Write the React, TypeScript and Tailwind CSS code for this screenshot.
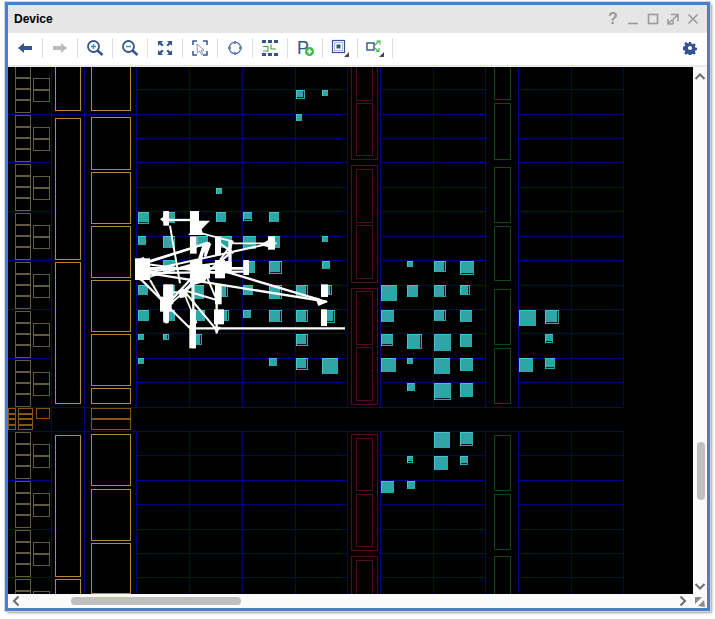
const FONT = "font-['Liberation_Sans',Arial,sans-serif]";

const H_MAIN = [114, 162, 211, 260, 309, 358, 407, 431, 480, 529, 577];
const H_DIM = [89, 138, 187, 236, 285, 333, 382, 455, 504, 553];
const V_MAIN = [136, 295, 380, 485, 518];
const V_DIM = [189, 242, 347, 433, 571, 623];

// small slice columns on the far left, one group per clock row
const GROUP_TOPS = [66, 115, 164, 213, 262, 311, 360, 432, 481, 530, 579];

const TALL_ORANGE: number[][] = [
  [55, 60, 80, 110], [55, 118, 80, 259], [55, 262, 80, 403], [55, 435, 80, 576], [55, 579, 80, 600],
  [91, 60, 130, 110], [91, 117, 130, 169], [91, 172, 130, 223], [91, 226, 130, 277], [91, 280, 130, 331],
  [91, 334, 130, 385], [91, 388, 130, 403], [91, 434, 130, 485], [91, 489, 130, 540], [91, 543, 130, 593],
];

const RED: number[][] = [
  [351, 60, 377, 159], [356, 60, 372, 100], [356, 103, 372, 155],
  [351, 165, 377, 282], [356, 169, 372, 222], [356, 225, 372, 278],
  [351, 288, 377, 404], [356, 291, 372, 344], [356, 347, 372, 400],
  [351, 434, 377, 550], [356, 438, 372, 490], [356, 494, 372, 546],
  [351, 556, 377, 620], [356, 560, 372, 620],
];

const GREEN: number[][] = [
  [494, 60, 510, 99], [494, 103, 510, 159], [494, 167, 510, 222], [494, 226, 510, 280],
  [494, 289, 510, 344], [494, 348, 510, 403], [494, 435, 510, 490], [494, 494, 510, 549], [494, 556, 510, 600],
];

// x, y, w, h, outline style: 0 solid, 1 gap at bottom, 2 gap at right, 3 both
const CELLS: number[][] = [
  [296, 90, 9, 9, 3], [322, 90, 6, 6, 0], [296, 114, 6, 7, 0], [216, 188, 6, 6, 0],
  [138, 212, 11, 12, 1], [163, 212, 12, 11, 0], [216, 212, 10, 10, 0], [243, 212, 9, 9, 1], [269, 212, 10, 10, 0],
  [138, 236, 8, 9, 0], [163, 236, 12, 12, 2], [197, 236, 11, 11, 0], [220, 236, 12, 12, 0], [243, 236, 13, 13, 0], [269, 236, 11, 12, 0], [322, 236, 6, 6, 0],
  [163, 260, 12, 12, 0], [243, 261, 12, 12, 0], [269, 261, 13, 13, 3], [322, 261, 8, 8, 0],
  [138, 285, 10, 10, 0], [163, 285, 12, 12, 0], [191, 285, 13, 14, 0], [220, 285, 8, 12, 2], [243, 285, 10, 10, 0], [269, 285, 13, 14, 2], [296, 285, 12, 12, 2], [322, 285, 10, 10, 2],
  [138, 310, 11, 11, 0], [163, 310, 12, 11, 0], [195, 310, 10, 11, 0], [219, 310, 10, 11, 2], [243, 310, 8, 8, 0], [269, 310, 13, 12, 2], [296, 310, 12, 12, 2], [322, 310, 13, 13, 3],
  [138, 334, 6, 6, 0], [163, 334, 6, 6, 2], [190, 334, 12, 11, 2], [296, 334, 12, 12, 3],
  [138, 358, 6, 6, 0], [269, 358, 8, 8, 0], [296, 358, 12, 12, 3], [322, 358, 16, 16, 0],
  [407, 261, 6, 6, 0], [434, 261, 12, 11, 2], [460, 261, 14, 14, 1],
  [381, 285, 16, 16, 0], [407, 285, 11, 12, 0], [434, 285, 12, 12, 2], [460, 285, 10, 10, 2],
  [381, 310, 13, 12, 0], [434, 310, 12, 11, 2], [460, 310, 12, 12, 0], [519, 310, 17, 16, 0], [545, 310, 14, 14, 3],
  [381, 334, 12, 12, 1], [407, 334, 15, 15, 2], [434, 334, 17, 17, 0], [460, 334, 12, 13, 0], [545, 334, 8, 9, 1],
  [381, 358, 15, 14, 0], [407, 358, 6, 6, 0], [434, 358, 16, 16, 0], [460, 358, 13, 13, 0], [519, 358, 14, 14, 0], [545, 358, 10, 11, 1],
  [407, 383, 8, 8, 0], [434, 383, 17, 17, 1], [460, 383, 13, 14, 0],
  [434, 432, 16, 16, 0], [460, 432, 13, 14, 1],
  [407, 456, 6, 7, 1], [434, 456, 14, 14, 0], [460, 456, 8, 9, 1],
  [381, 481, 13, 12, 0], [407, 481, 8, 8, 0],
];

// net rubber bands, in a 3x space starting at (130,190)
const NET_BLOCKS: number[][] = [
  [100, 63, 17, 44], [180, 63, 27, 72], [180, 139, 20, 52], [255, 139, 18, 57], [414, 139, 21, 40],
  [15, 205, 45, 65], [180, 210, 37, 60], [255, 210, 30, 55], [340, 210, 17, 45], [100, 283, 30, 60],
  [255, 283, 20, 60], [573, 283, 21, 38], [100, 330, 17, 68], [180, 358, 18, 50], [252, 358, 30, 45],
  [573, 358, 18, 50], [178, 405, 20, 70], [215, 225, 25, 40], [285, 215, 20, 35], [90, 320, 35, 45],
];

const NET_LINES: number[][] = [
  [117, 90, 190, 90, 7], [120, 107, 150, 280, 6], [215, 130, 310, 155, 5], [200, 170, 20, 225, 7],
  [235, 158, 60, 215, 7], [440, 160, 310, 160, 5], [400, 165, 60, 240, 6], [60, 235, 340, 235, 8],
  [60, 250, 590, 335, 7], [270, 240, 570, 330, 7], [20, 255, 110, 345, 7], [60, 270, 100, 340, 6],
  [180, 270, 110, 345, 7], [230, 250, 110, 350, 6], [110, 345, 180, 415, 6], [160, 300, 260, 420, 6],
  [230, 260, 265, 340, 6], [160, 300, 260, 330, 6], [220, 170, 180, 290, 7], [300, 190, 190, 280, 7],
  [190, 415, 645, 415, 7], [190, 270, 190, 475, 7], [105, 300, 110, 400, 8], [260, 340, 260, 430, 7],
  [300, 150, 300, 240, 10], [20, 250, 340, 245, 7], [60, 260, 180, 225, 6], [30, 220, 260, 250, 6],
  [60, 245, 300, 215, 6], [160, 305, 230, 240, 8], [160, 305, 100, 310, 6], [160, 305, 200, 400, 5],
  [270, 160, 310, 190, 6], [310, 155, 270, 210, 6], [225, 160, 210, 210, 10], [225, 200, 240, 160, 8],
];

const NET_HEADS = [
  '90,88 108,74 108,102', '205,92 240,92 215,118 220,135 175,135 190,115', '390,165 415,150 415,172',
  '555,322 595,335 565,348', '172,408 195,400 195,420', '250,410 272,410 260,432', '215,160 240,155 225,195',
  '15,215 40,200 60,225 62,265 30,272 15,255', '175,270 205,225 240,240 225,275 190,285', '145,300 175,295 170,320 150,325',
];

function Box({ b, color }: { b: number[]; color: string }) {
  return <rect x={b[0] + 0.5} y={b[1] + 0.5} width={b[2] - b[0]} height={b[3] - b[1]} fill="none" stroke={color} />;
}

function Cell({ c }: { c: number[] }) {
  const [x, y, w, h, gap] = c;
  return (
    <g>
      <rect x={x} y={y} width={w} height={h} fill="#2fa5a6" />
      <rect x={x} y={y} width={w} height={1} fill="#45c3cb" />
      <rect x={x} y={y} width={1} height={h} fill="#45c3cb" />
      {(gap === 1 || gap === 3) && <rect x={x + 1} y={y + h - 2} width={w - 2} height={1} fill="#04211f" />}
      {(gap === 2 || gap === 3) && <rect x={x + w - 2} y={y + 1} width={1} height={h - 2} fill="#04211f" />}
    </g>
  );
}

function SliceGroup({ top }: { top: number }) {
  const c = '#625a3c';
  return (
    <g>
      <Box b={[15, top, 30, top + 11]} color={c} />
      <Box b={[15, top + 12, 30, top + 22]} color={c} />
      <Box b={[15, top + 23, 30, top + 33]} color={c} />
      <Box b={[15, top + 34, 30, top + 46]} color={c} />
      <Box b={[33, top + 12, 49, top + 23]} color={c} />
      <Box b={[33, top + 24, 49, top + 35]} color={c} />
    </g>
  );
}

function DeviceCanvas() {
  return (
    <svg className="block h-[527px] w-[685px] bg-black" viewBox="8 67 685 527" width={685} height={527}>
      <g shapeRendering="crispEdges">
        {H_MAIN.concat(H_DIM).map((y) => {
          const main = H_MAIN.includes(y);
          const color = main ? '#00008a' : '#000072';
          const wide = y === 407 || y === 431;
          return (
            <g key={y} stroke={color}>
              {wide && <line x1={8} x2={623} y1={y + 0.5} y2={y + 0.5} />}
              {!wide && (
                <>
                  {main && <line x1={8} x2={y === 114 ? 136 : 51} y1={y + 0.5} y2={y + 0.5} />}
                  <line x1={136} x2={347} y1={y + 0.5} y2={y + 0.5} />
                  <line x1={380} x2={485} y1={y + 0.5} y2={y + 0.5} />
                  <line x1={518} x2={623} y1={y + 0.5} y2={y + 0.5} />
                </>
              )}
            </g>
          );
        })}
        {V_MAIN.concat(V_DIM).map((x) => (
          <g key={x} stroke={V_MAIN.includes(x) ? '#00008a' : '#000072'}>
            <line x1={x + 0.5} x2={x + 0.5} y1={67} y2={407} />
            <line x1={x + 0.5} x2={x + 0.5} y1={431} y2={594} />
          </g>
        ))}
        <line x1={51.5} x2={51.5} y1={67} y2={594} stroke="#00008a" />
        <line x1={84.5} x2={84.5} y1={67} y2={594} stroke="#00008a" />

        {GROUP_TOPS.map((t) => <SliceGroup key={t} top={t} />)}
        {TALL_ORANGE.map((b) => <Box key={b.join()} b={b} color="#b5883a" />)}

        {/* clock row block on the left */}
        <Box b={[8, 408, 15, 429]} color="#8a5412" />
        <Box b={[18, 408, 32, 429]} color="#8a5412" />
        <rect x={8} y={413} width={25} height={2} fill="#8a5412" />
        <rect x={8} y={418} width={25} height={2} fill="#8a5412" />
        <rect x={8} y={424} width={25} height={2} fill="#8a5412" />
        <rect x={16} y={408} width={2} height={22} fill="#000" />
        <Box b={[36, 408, 49, 418]} color="#8a5412" />
        <Box b={[91, 408, 130, 429]} color="#8a5412" />
        <rect x={91} y={418} width={40} height={2} fill="#8a5412" />

        {RED.map((b) => <Box key={b.join()} b={b} color="#4c1024" />)}
        {GREEN.map((b) => <Box key={b.join()} b={b} color="#0d4a12" />)}
        {CELLS.map((c) => <Cell key={c.join()} c={c} />)}
      </g>

      <g transform="translate(130 190) scale(0.3333)" fill="#fff">
        {NET_LINES.map((l) => (
          <line key={l.join()} x1={l[0]} y1={l[1]} x2={l[2]} y2={l[3]} stroke="#fff" strokeWidth={l[4]} />
        ))}
        {NET_BLOCKS.map((b) => <rect key={b.join()} x={b[0]} y={b[1]} width={b[2]} height={b[3]} />)}
        {NET_HEADS.map((p) => <polygon key={p} points={p} />)}
      </g>
    </svg>
  );
}

const NAVY = '#34548f';

function ToolIcon({ children }: { children: React.ReactNode }) {
  return (
    <div className="flex w-[34px] items-center justify-center">
      <svg width={18} height={18} viewBox="0 0 18 18">{children}</svg>
    </div>
  );
}

function Sep() {
  return <div className="h-5 w-px bg-[#dedede]" />;
}

function Corner() {
  return <path d="M18 13v5h-5z" fill="#4a4a4a" />;
}

function Toolbar() {
  return (
    <div className="flex h-[34px] items-center border-b-2 border-[#e8e8e8] bg-white pb-0.5">
      <ToolIcon><path d="M2 9l6-5v3h8v4H8v3z" fill={NAVY} /></ToolIcon>
      <Sep />
      <ToolIcon><path d="M16 9l-6-5v3H2v4h8v3z" fill="#bdbdbd" /></ToolIcon>
      <Sep />
      <ToolIcon>
        <circle cx={7.5} cy={7.5} r={5.5} fill="none" stroke={NAVY} strokeWidth={1.8} />
        <path d="M5 7.5h5M7.5 5v5" stroke="#3f8f9f" strokeWidth={1.4} />
        <path d="M11.5 11.5l5 4.5" stroke={NAVY} strokeWidth={2.4} />
      </ToolIcon>
      <Sep />
      <ToolIcon>
        <circle cx={7.5} cy={7.5} r={5.5} fill="none" stroke={NAVY} strokeWidth={1.8} />
        <path d="M5 7.5h5" stroke="#3f8f9f" strokeWidth={1.4} />
        <path d="M11.5 11.5l5 4.5" stroke={NAVY} strokeWidth={2.4} />
      </ToolIcon>
      <Sep />
      <ToolIcon>
        <path d="M2 2h5L5.3 3.7 7.6 6 6 7.6 3.7 5.3 2 7zM16 2v5l-1.7-1.7L12 7.6 10.4 6l2.3-2.3L11 2zM2 16v-5l1.7 1.7L6 10.4 7.6 12l-2.3 2.3L7 16zM16 16h-5l1.7-1.7-2.3-2.3 1.6-1.6 2.3 2.3L16 11z" fill={NAVY} />
      </ToolIcon>
      <Sep />
      <ToolIcon>
        <path d="M6 2H2v4M12 2h4v4M2 12v4h4M16 12v4h-4" fill="none" stroke={NAVY} strokeWidth={1.5} />
        <path d="M6 5l7 6-3 .4 1.8 3.4-1.4.7-1.800-3.400L6.400 14z" fill="#fff" stroke="#6f7f9c" strokeWidth={0.8} />
      </ToolIcon>
      <Sep />
      <ToolIcon>
        <circle cx={9} cy={9} r={5.8} fill="none" stroke="#5f7cab" strokeWidth={1.4} />
        <path d="M9 1v4M9 13v4M1 9h4M13 9h4" stroke="#fff" strokeWidth={2} />
        <path d="M9 2v3M9 13v3M2 9h3M13 9h3" stroke={NAVY} strokeWidth={1.4} />
      </ToolIcon>
      <Sep />
      <ToolIcon>
        <path d="M1 1h4v3H1zM7 1h4v3H7zM13 1h4v3h-4zM1 14h4v3H1zM7 14h4v3H7zM13 14h4v3h-4z" fill={NAVY} />
        <path d="M2 7.500h5V12H2M10 5.500V10h5" fill="none" stroke="#3ea33e" strokeWidth={1.1} />
      </ToolIcon>
      <Sep />
      <ToolIcon>
        <text x={1} y={15} fontFamily="'Liberation Sans', Arial, sans-serif" fontSize={18} fill={NAVY}>P</text>
        <circle cx={13.500} cy={12.500} r={4.500} fill="#43b649" />
        <path d="M11 12.500h5M13.500 10v5" stroke="#fff" strokeWidth={1.4} />
      </ToolIcon>
      <Sep />
      <ToolIcon>
        <rect x={1.5} y={1.5} width={12} height={12} fill="#fff" stroke={NAVY} strokeWidth={1.2} />
        <rect x={3.5} y={3.500} width={8} height={8} fill="#fff" stroke="#a9bbd8" strokeWidth={1} />
        <rect x={5.5} y={5.5} width={4} height={4} fill={NAVY} />
        <Corner />
      </ToolIcon>
      <Sep />
      <ToolIcon>
        <rect x={1} y={4} width={7} height={7} fill="#fff" stroke={NAVY} strokeWidth={1.4} />
        <path d="M9 6l4-4M10.500 2H14v3.500M9 9l3 3M9.500 12.500H13V9" fill="none" stroke="#3fbb4a" strokeWidth={1.2} />
        <Corner />
      </ToolIcon>
      <Sep />
      <svg className="ml-auto mr-[10px]" width={14} height={14} viewBox="0 0 16 16">
        <path
          d="M6.700 1h2.600l.4 2 1.400.6 1.700-1.100 1.800 1.800-1.100 1.700.6 1.400 2 .4v2.600l-2 .4-.6 1.400 1.100 1.700-1.800 1.800-1.700-1.100-1.400.6-.4 2H6.700l-.4-2-1.400-.6-1.700 1.100-1.800-1.800 1.100-1.700-.6-1.400-2-.4V6.400l2-.4.6-1.400-1.100-1.700 1.800-1.800 1.700 1.100L6.300 3zM8 5.700a2.300 2.300 0 100 4.600 2.300 2.300 0 000-4.600z"
          fill={NAVY}
          fillRule="evenodd"
        />
      </svg>
    </div>
  );
}

function TitleBar() {
  return (
    <div className="flex h-7 items-center bg-[#e6e6e6] pl-1.5 pr-[4px]">
      <span className="text-xs font-bold text-black">Device</span>
      <div className="ml-auto flex items-center">
        <span className="w-5 text-center text-base font-bold leading-none text-[#9a9a9a]">?</span>
        <svg width={20} height={14} viewBox="0 0 20 14" className="text-[#9a9a9a]">
          <path d="M5 11.500h10" stroke="currentColor" strokeWidth={1.6} />
        </svg>
        <svg width={20} height={14} viewBox="0 0 20 14" className="text-[#9a9a9a]">
          <rect x={5.500} y={2.500} width={9} height={9} fill="none" stroke="currentColor" strokeWidth={1.6} />
        </svg>
        <svg width={20} height={14} viewBox="0 0 20 14" className="text-[#9a9a9a]">
          <path d="M8 2.500h7v7M10 12H5V7M15 2.500L10 7.500M10 7.500v4.500M5 12L9 8" fill="none" stroke="currentColor" strokeWidth={1.5} />
        </svg>
        <svg width={20} height={14} viewBox="0 0 20 14" className="text-[#9a9a9a]">
          <path d="M5.500 2.500l9 9M14.500 2.500l-9 9" stroke="currentColor" strokeWidth={1.6} />
        </svg>
      </div>
    </div>
  );
}

function Chevron({ d }: { d: string }) {
  return (
    <svg width={12} height={10} viewBox="0 0 12 10" className="shrink-0">
      <path d={d} fill="none" stroke="#6e6e6e" strokeWidth={2} />
    </svg>
  );
}

export default function App() {
  return (
    <div className={`h-[619px] w-[715px] overflow-hidden bg-white pl-[5px] pt-[2px] ${FONT}`}>
      <div className="flex h-[609px] w-[705px] flex-col border-[3px] border-[#4a7dcb] shadow-[0_0_0_1px_#d4d4d4,2px_2px_2px_#a0a0a0]">
        <TitleBar />
        <Toolbar />
        <div className="flex h-[527px]">
          <DeviceCanvas />
          <div className="flex w-[14px] flex-col items-center bg-[#fafafa] pt-[4px]">
            <Chevron d="M1.500 8L6 3.500 10.500 8" />
            <div className="ml-[1px] mt-[361px] h-[58px] w-2 rounded bg-[#c0c0c0]" />
            <div className="mt-[82px]"><Chevron d="M1.500 2L6 6.500 10.500 2" /></div>
          </div>
        </div>
        <div className="flex h-[14px] items-center bg-[#fafafa] pl-[3px]">
          <svg width={10} height={12} viewBox="0 0 10 12"><path d="M7.500 1.500L3 6l4.500 4.500" fill="none" stroke="#6e6e6e" strokeWidth={2} /></svg>
          <div className="ml-[50px] h-2 w-[170px] rounded bg-[#c0c0c0]" />
          <svg className="ml-auto" width={10} height={12} viewBox="0 0 10 12"><path d="M2.500 1.500L7 6l-4.500 4.500" fill="none" stroke="#6e6e6e" strokeWidth={2} /></svg>
          <svg className="ml-[5px] mr-[1px]" width={13} height={13} viewBox="0 0 13 13"><path d="M2 2h7L2 9zM5 11l6-6 1 7z" fill="#8a8a8a" /></svg>
        </div>
      </div>
    </div>
  );
}
